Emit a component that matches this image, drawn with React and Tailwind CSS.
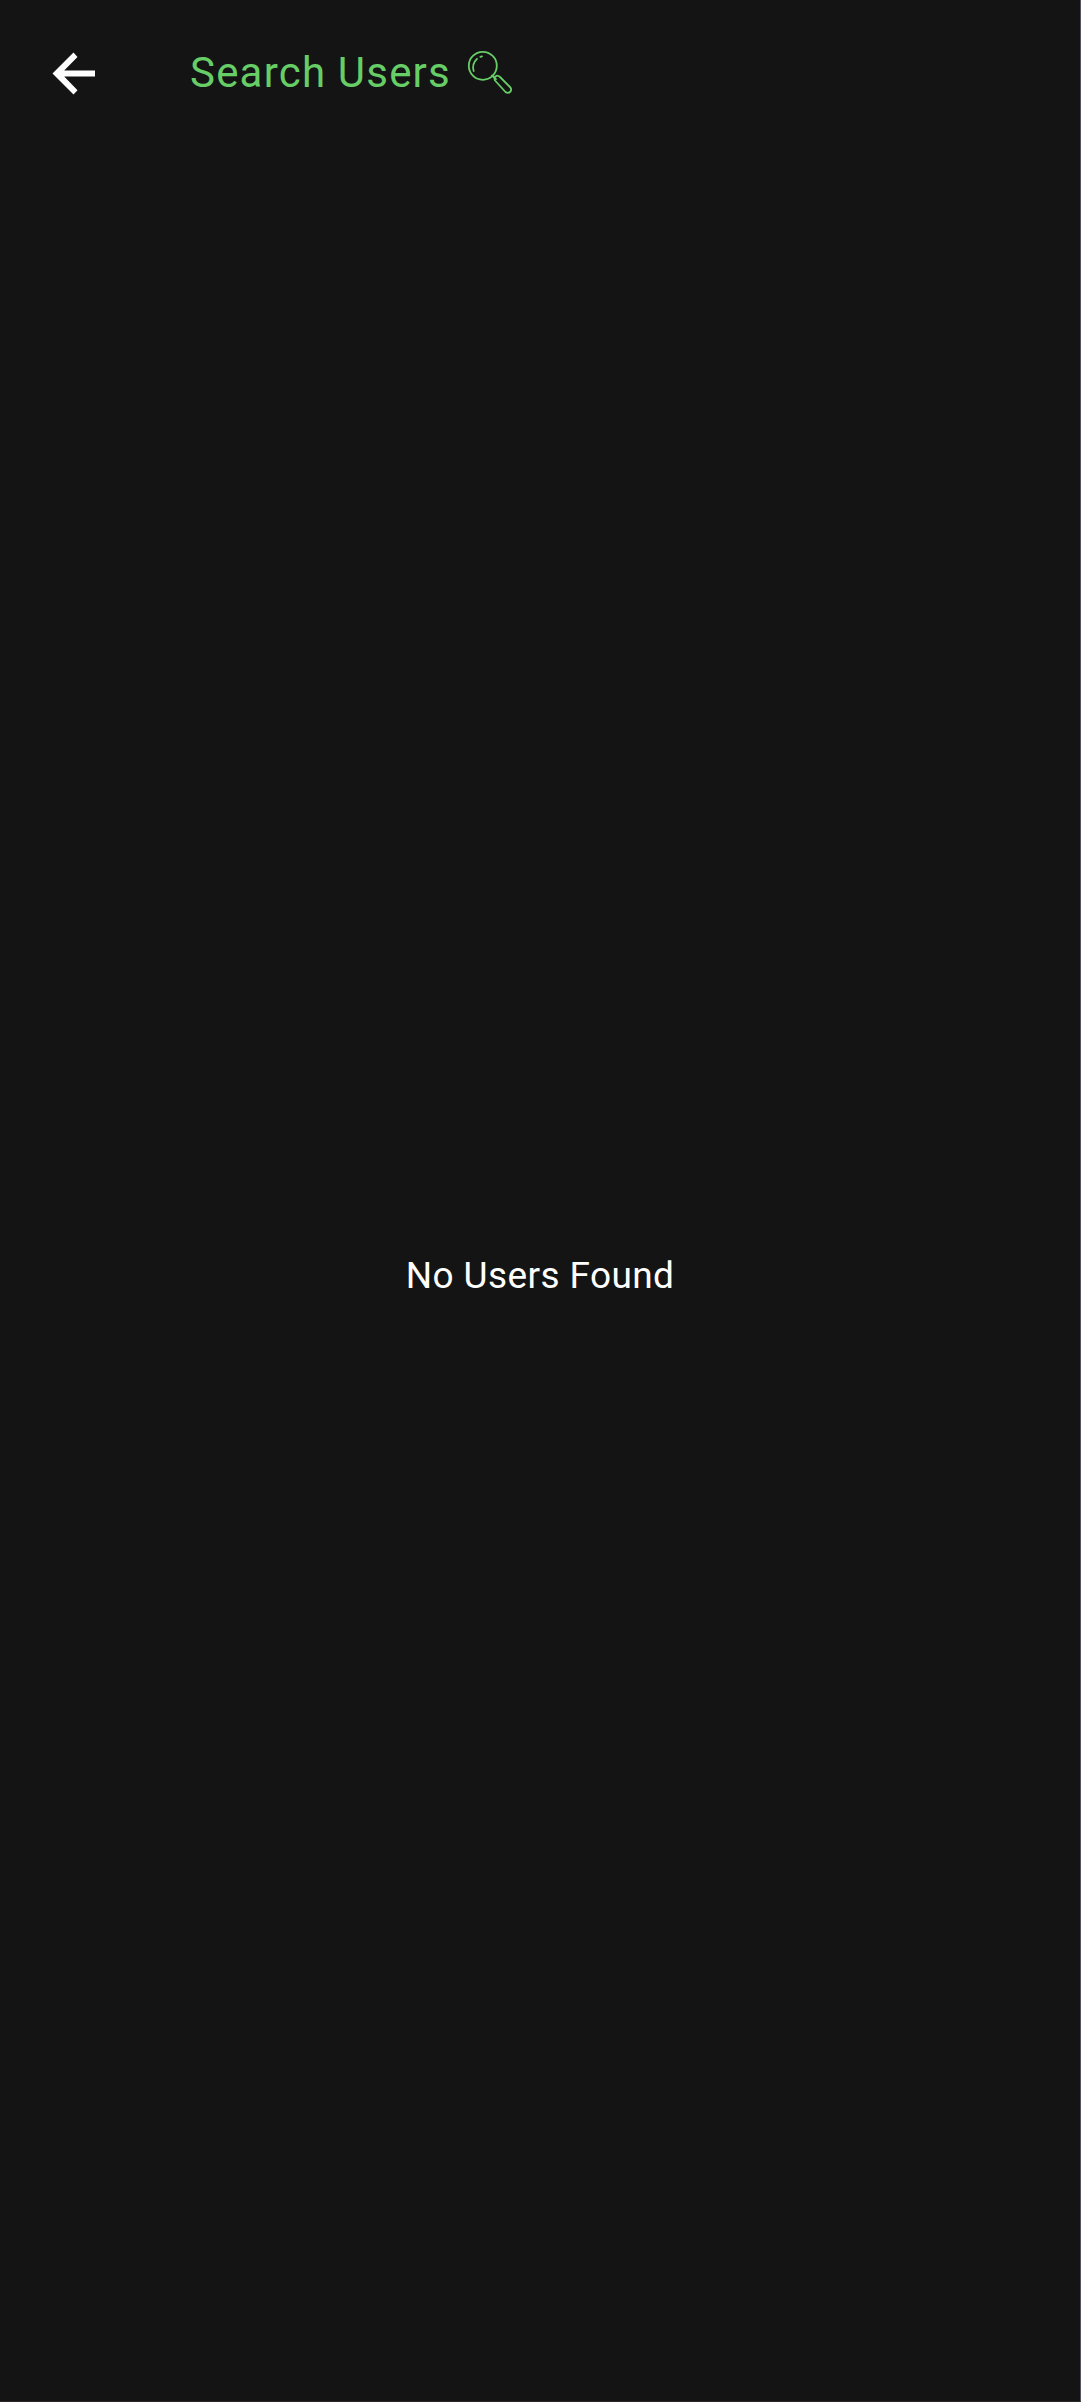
export default function App() {
  return (
    <div className="h-[2402px] w-[1082px] border-r border-white bg-[#141414] font-['Roboto',sans-serif]">
      <div className="flex h-full flex-col border-r border-b border-r-[#55565b] border-b-[#2d2629]">
        <header className="flex h-[148px] items-center pl-[50px]">
          <button aria-label="Back" className="size-[48px]">
            <svg viewBox="0 0 48 48" className="size-full fill-white">
              <path d="M45 20.5H14.2L27.5 7L23.5 2.5L2.5 23.5L23.5 44.5L27.5 40.2L14.2 26.5H45Z" />
            </svg>
          </button>
          <div className="ml-[92px] flex items-center text-[#67ce67]">
            <h1 className="pb-0.5 text-[42px] leading-[56px] font-normal tracking-[1.2px] whitespace-nowrap">Search Users</h1>
            <svg viewBox="0 0 48 48" className="ml-[15px] size-[48px] fill-none stroke-current stroke-[1.8]" strokeLinecap="round" strokeLinejoin="round">
              <circle cx="16.8" cy="15.8" r="14" />
              <path d="M7.7 21Q5.5 14 11 8.8M14.3 6.8L16 6.3M26 25.5L30 29.2" />
              <path d="M29 30.5Q27.5 27 30.5 25.8Q32 25.3 34 27L44 37Q46 39 44.5 41.5Q42 44 39.5 42Z" />
            </svg>
          </div>
        </header>
        <main className="flex flex-1 items-center justify-center pt-0.5">
          <p className="text-[37px] leading-[48px] tracking-[0.4px] text-white">No Users Found</p>
        </main>
      </div>
    </div>
  );
}
